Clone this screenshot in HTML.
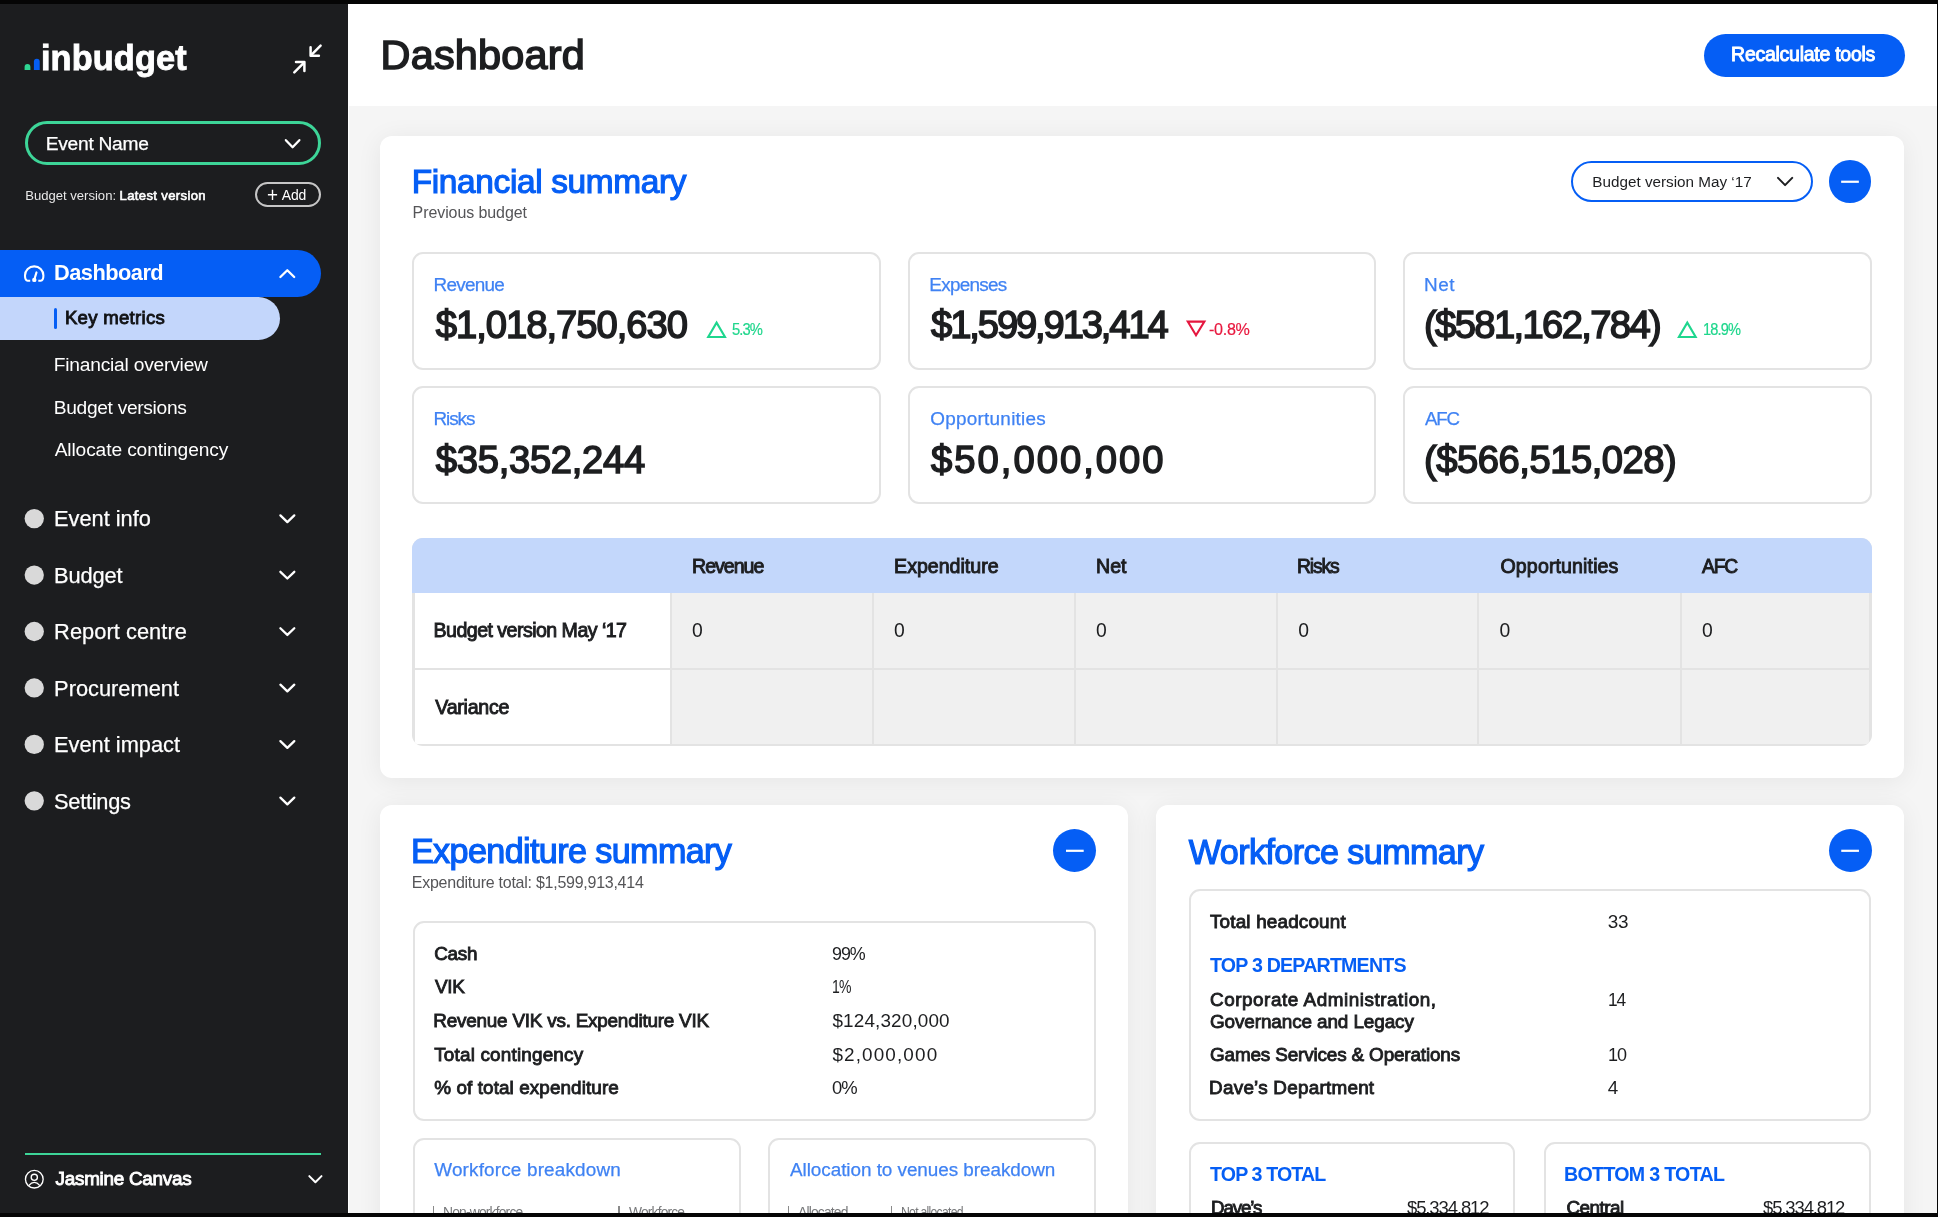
<!DOCTYPE html>
<html><head><meta charset="utf-8"><style>
*{box-sizing:border-box;margin:0;padding:0}
html,body{width:1938px;height:1217px;overflow:hidden;background:#000}
body{position:relative;font-family:"Liberation Sans",sans-serif}
.t{position:absolute;white-space:nowrap;line-height:1;z-index:6}
.a{position:absolute}
</style></head><body>
<div class="a" style="left:0px;top:0px;width:348px;height:1217px;background:#1c1d1f"></div>
<div class="a" style="left:348px;top:0px;width:1590px;height:106px;background:#fff"></div>
<div class="a" style="left:348px;top:106px;width:1590px;height:1111px;background:#f5f5f5"></div>
<div class="a" style="left:348px;top:106px;width:1px;height:1111px;background:#fff"></div>
<div class="a" style="left:25px;top:121px;width:295.5px;height:44px;border:3px solid #3dd598;border-radius:22px"></div>
<div class="a" style="left:255.3px;top:182.4px;width:65.5px;height:25.1px;border:2px solid #c6c6c6;border-radius:13px"></div>
<div class="a" style="left:0px;top:250px;width:321px;height:47px;background:#055ef5;border-radius:0 23.5px 23.5px 0"></div>
<div class="a" style="left:0px;top:297.4px;width:280px;height:43px;background:#c3d6fb;border-radius:0 21.5px 21.5px 0"></div>
<div class="a" style="left:54px;top:308.3px;width:3px;height:21px;background:#055ef5;border-radius:1.5px"></div>
<div class="a" style="left:24.7px;top:1152.6px;width:296.3px;height:2px;background:#3dd598"></div>
<div class="a" style="left:1704.4px;top:33.5px;width:200.2px;height:43.1px;background:#055ef5;border-radius:22px"></div>
<div class="a" style="left:380px;top:136px;width:1524px;height:641.8px;background:#fff;border-radius:12px;box-shadow:0 3px 26px rgba(0,0,0,0.065)"></div>
<div class="a" style="left:1571.2px;top:160.5px;width:242.2px;height:41.6px;border:2.8px solid #055ef5;border-radius:21px"></div>
<div class="a" style="left:1828.6px;top:160.3px;width:42.7px;height:42.5px;background:#055ef5;border-radius:50%"></div>
<div class="a" style="left:412.4px;top:252.0px;width:468.3px;height:118.2px;border:2.5px solid #e3e3e3;border-radius:11px;background:#fff"></div>
<div class="a" style="left:412.4px;top:386.3px;width:468.3px;height:118.2px;border:2.5px solid #e3e3e3;border-radius:11px;background:#fff"></div>
<div class="a" style="left:908.0px;top:252.0px;width:468.3px;height:118.2px;border:2.5px solid #e3e3e3;border-radius:11px;background:#fff"></div>
<div class="a" style="left:908.0px;top:386.3px;width:468.3px;height:118.2px;border:2.5px solid #e3e3e3;border-radius:11px;background:#fff"></div>
<div class="a" style="left:1403.4px;top:252.0px;width:468.3px;height:118.2px;border:2.5px solid #e3e3e3;border-radius:11px;background:#fff"></div>
<div class="a" style="left:1403.4px;top:386.3px;width:468.3px;height:118.2px;border:2.5px solid #e3e3e3;border-radius:11px;background:#fff"></div>
<div class="a" style="left:412.4px;top:537.7px;width:1459.2px;height:208.4px;border-radius:11px;overflow:hidden;background:#e3e3e3"><div class="a" style="left:0px;top:0px;width:1459.2px;height:55.8px;background:#c3d7fb"></div><div class="a" style="left:2.5px;top:55.8px;width:255.10000000000002px;height:74.50000000000001px;background:#fff"></div><div class="a" style="left:259.6px;top:55.8px;width:200.0px;height:74.50000000000001px;background:#f0f0f0"></div><div class="a" style="left:461.6px;top:55.8px;width:200.29999999999995px;height:74.50000000000001px;background:#f0f0f0"></div><div class="a" style="left:663.9px;top:55.8px;width:199.60000000000002px;height:74.50000000000001px;background:#f0f0f0"></div><div class="a" style="left:865.5px;top:55.8px;width:199.4000000000001px;height:74.50000000000001px;background:#f0f0f0"></div><div class="a" style="left:1066.9px;top:55.8px;width:200.39999999999986px;height:74.50000000000001px;background:#f0f0f0"></div><div class="a" style="left:1269.3px;top:55.8px;width:187.4000000000001px;height:74.50000000000001px;background:#f0f0f0"></div><div class="a" style="left:2.5px;top:132.4px;width:255.10000000000002px;height:73.5px;background:#fff"></div><div class="a" style="left:259.6px;top:132.4px;width:200.0px;height:73.5px;background:#f0f0f0"></div><div class="a" style="left:461.6px;top:132.4px;width:200.29999999999995px;height:73.5px;background:#f0f0f0"></div><div class="a" style="left:663.9px;top:132.4px;width:199.60000000000002px;height:73.5px;background:#f0f0f0"></div><div class="a" style="left:865.5px;top:132.4px;width:199.4000000000001px;height:73.5px;background:#f0f0f0"></div><div class="a" style="left:1066.9px;top:132.4px;width:200.39999999999986px;height:73.5px;background:#f0f0f0"></div><div class="a" style="left:1269.3px;top:132.4px;width:187.4000000000001px;height:73.5px;background:#f0f0f0"></div></div>
<div class="a" style="left:380px;top:805px;width:748.2px;height:600px;background:#fff;border-radius:12px;box-shadow:0 3px 26px rgba(0,0,0,0.065)"></div>
<div class="a" style="left:1053.4px;top:828.9px;width:42.9px;height:42.9px;background:#055ef5;border-radius:50%"></div>
<div class="a" style="left:412.9px;top:921.1px;width:683px;height:199.5px;border:2.5px solid #e3e3e3;border-radius:11px;background:#fff"></div>
<div class="a" style="left:412.9px;top:1138.4px;width:328px;height:200px;border:2.5px solid #e3e3e3;border-radius:11px;background:#fff"></div>
<div class="a" style="left:767.8px;top:1138.4px;width:328.1px;height:200px;border:2.5px solid #e3e3e3;border-radius:11px;background:#fff"></div>
<div class="a" style="left:1155.6px;top:805px;width:748.2px;height:600px;background:#fff;border-radius:12px;box-shadow:0 3px 26px rgba(0,0,0,0.065)"></div>
<div class="a" style="left:1828.5px;top:829.1px;width:43.2px;height:43.3px;background:#055ef5;border-radius:50%"></div>
<div class="a" style="left:1188.6px;top:888.8px;width:682.3px;height:232.4px;border:2.5px solid #e3e3e3;border-radius:11px;background:#fff"></div>
<div class="a" style="left:1188.6px;top:1141.6px;width:326.8px;height:200px;border:2.5px solid #e3e3e3;border-radius:11px;background:#fff"></div>
<div class="a" style="left:1543.9px;top:1141.6px;width:327px;height:200px;border:2.5px solid #e3e3e3;border-radius:11px;background:#fff"></div>
<div class="a" style="left:432.6px;top:1206px;width:1.3px;height:11px;background:#8a8a8a"></div>
<div class="a" style="left:618.4px;top:1206px;width:1.3px;height:11px;background:#8a8a8a"></div>
<div class="a" style="left:787.8px;top:1206px;width:1.3px;height:11px;background:#8a8a8a"></div>
<div class="a" style="left:890.9px;top:1206px;width:1.3px;height:11px;background:#8a8a8a"></div>
<svg class="a" style="left:0;top:0;z-index:5" width="1938" height="1217" viewBox="0 0 1938 1217"><path d="M24.6 70.1 V66.9 A2.9 2.9 0 0 1 30.4 66.9 V70.1 Z" fill="#2ed592"/><path d="M33.9 70.1 V61.6 A2.9 2.9 0 0 1 39.7 61.6 V70.1 Z" fill="#055ef5"/><g fill="none" stroke="#fff" stroke-width="2.5" stroke-linecap="round" stroke-linejoin="round"><path d="M320.6 45.6 L311.4 54.8"/><path d="M310.6 47.3 V55.8 H318.9"/><path d="M294.3 72.3 L303.3 63.3"/><path d="M296 62 H304.4 V70.9"/></g><path d="M285.85 140.20 L292.60 147.20 L299.35 140.20" fill="none" stroke="#fff" stroke-width="2.3" stroke-linecap="round" stroke-linejoin="round"/><path d="M267.9 194.8 H277.1 M272.5 189.8 V199.9" stroke="#fff" stroke-width="1.4"/><g fill="none" stroke="#fff" stroke-width="2.1" stroke-linecap="butt"><path d="M30.2 280.7 H27.6 Q25.0 280.7 25.0 275.6 A9.2 9.2 0 0 1 43.4 275.6 Q43.4 280.7 40.8 280.7 H38.3"/><path d="M34.3 279.6 L36.5 272.4" stroke-linecap="round"/></g><circle cx="34.3" cy="279.9" r="2.2" fill="#fff"/><path d="M280.40 277.00 L287.30 270.20 L294.20 277.00" fill="none" stroke="#fff" stroke-width="2.3" stroke-linecap="round" stroke-linejoin="round"/><circle cx="34.25" cy="518.60" r="9.65" fill="#d9d9d9"/><path d="M280.40 515.35 L287.35 522.05 L294.30 515.35" fill="none" stroke="#fff" stroke-width="2.3" stroke-linecap="round" stroke-linejoin="round"/><circle cx="34.25" cy="575.05" r="9.65" fill="#d9d9d9"/><path d="M280.40 571.80 L287.35 578.50 L294.30 571.80" fill="none" stroke="#fff" stroke-width="2.3" stroke-linecap="round" stroke-linejoin="round"/><circle cx="34.25" cy="631.50" r="9.65" fill="#d9d9d9"/><path d="M280.40 628.25 L287.35 634.95 L294.30 628.25" fill="none" stroke="#fff" stroke-width="2.3" stroke-linecap="round" stroke-linejoin="round"/><circle cx="34.25" cy="687.95" r="9.65" fill="#d9d9d9"/><path d="M280.40 684.70 L287.35 691.40 L294.30 684.70" fill="none" stroke="#fff" stroke-width="2.3" stroke-linecap="round" stroke-linejoin="round"/><circle cx="34.25" cy="744.40" r="9.65" fill="#d9d9d9"/><path d="M280.40 741.15 L287.35 747.85 L294.30 741.15" fill="none" stroke="#fff" stroke-width="2.3" stroke-linecap="round" stroke-linejoin="round"/><circle cx="34.25" cy="800.85" r="9.65" fill="#d9d9d9"/><path d="M280.40 797.60 L287.35 804.30 L294.30 797.60" fill="none" stroke="#fff" stroke-width="2.3" stroke-linecap="round" stroke-linejoin="round"/><g fill="none" stroke="#fff" stroke-width="1.35"><circle cx="34.3" cy="1179.2" r="8.85"/><circle cx="34.3" cy="1177.3" r="3.1"/><path d="M28.7 1185.6 Q34.3 1179.2 39.9 1185.6"/></g><path d="M309.30 1176.10 L315.40 1182.30 L321.50 1176.10" fill="none" stroke="#fff" stroke-width="2.0" stroke-linecap="round" stroke-linejoin="round"/><path d="M1778.00 177.90 L1785.10 185.10 L1792.20 177.90" fill="none" stroke="#1d1e20" stroke-width="2.0" stroke-linecap="round" stroke-linejoin="round"/><path d="M1841.15 181.75 H1858.85" stroke="#fff" stroke-width="2.2" stroke-linecap="butt"/><path d="M1066.00 850.80 H1083.70" stroke="#fff" stroke-width="2.2" stroke-linecap="butt"/><path d="M1841.25 850.80 H1858.95" stroke="#fff" stroke-width="2.2" stroke-linecap="butt"/><path d="M716.6 322.6 L708.2 337.0 H725.0 Z" fill="none" stroke="#1ed68e" stroke-width="2.1" stroke-linejoin="miter"/><path d="M1196.0 335.2 L1187.8 321.6 H1204.4 Z" fill="none" stroke="#e5173f" stroke-width="2.1"/><path d="M1687.3 322.6 L1678.9 337.0 H1695.7 Z" fill="none" stroke="#1ed68e" stroke-width="2.1"/></svg>
<div style="position:absolute;left:0;top:0;width:1938px;height:1217px;z-index:6;will-change:transform"><div id="t0" class="t " style="left:40.90px;top:40.66px;font-size:34.30px;font-weight:700;color:#ffffff;letter-spacing:0.144px;-webkit-text-stroke:0.9px #fff;">inbudget</div>
<div id="t1" class="t " style="left:45.76px;top:133.56px;font-size:19.19px;color:#ffffff;letter-spacing:-0.269px;-webkit-text-stroke:0.25px currentColor;">Event Name</div>
<div id="t2" class="t " style="left:25.16px;top:189.43px;font-size:13.08px;color:#e8e8e8;letter-spacing:-0.000px;">Budget version:</div>
<div id="t3" class="t " style="left:119.60px;top:189.43px;font-size:13.08px;color:#ffffff;letter-spacing:0.352px;-webkit-text-stroke:0.61px currentColor;">Latest version</div>
<div id="t4" class="t " style="left:281.84px;top:189.19px;font-size:13.95px;color:#ffffff;letter-spacing:-0.147px;">Add</div>
<div id="t5" class="t " style="left:54.04px;top:262.44px;font-size:21.80px;font-weight:700;color:#ffffff;letter-spacing:-0.529px;">Dashboard</div>
<div id="t6" class="t " style="left:64.88px;top:309.45px;font-size:18.60px;color:#111214;letter-spacing:0.279px;-webkit-text-stroke:0.87px currentColor;">Key metrics</div>
<div id="t7" class="t " style="left:53.76px;top:355.36px;font-size:19.19px;color:#ffffff;letter-spacing:-0.213px;">Financial overview</div>
<div id="t8" class="t " style="left:53.76px;top:397.76px;font-size:19.19px;color:#ffffff;letter-spacing:-0.322px;">Budget versions</div>
<div id="t9" class="t " style="left:54.66px;top:439.56px;font-size:19.19px;color:#ffffff;letter-spacing:-0.124px;">Allocate contingency</div>
<div id="t10" class="t " style="left:54.10px;top:508.34px;font-size:21.80px;color:#ffffff;letter-spacing:-0.017px;-webkit-text-stroke:0.25px currentColor;">Event info</div>
<div id="t11" class="t " style="left:54.10px;top:564.79px;font-size:21.80px;color:#ffffff;letter-spacing:-0.138px;-webkit-text-stroke:0.25px currentColor;">Budget</div>
<div id="t12" class="t " style="left:54.10px;top:621.24px;font-size:21.80px;color:#ffffff;letter-spacing:0.058px;-webkit-text-stroke:0.25px currentColor;">Report centre</div>
<div id="t13" class="t " style="left:54.10px;top:677.69px;font-size:21.80px;color:#ffffff;letter-spacing:0.008px;-webkit-text-stroke:0.25px currentColor;">Procurement</div>
<div id="t14" class="t " style="left:54.10px;top:734.14px;font-size:21.80px;color:#ffffff;letter-spacing:-0.011px;-webkit-text-stroke:0.25px currentColor;">Event impact</div>
<div id="t15" class="t " style="left:54.10px;top:790.59px;font-size:21.80px;color:#ffffff;letter-spacing:-0.282px;-webkit-text-stroke:0.25px currentColor;">Settings</div>
<div id="t16" class="t " style="left:55.56px;top:1170.41px;font-size:18.90px;color:#ffffff;letter-spacing:-0.270px;-webkit-text-stroke:0.89px currentColor;">Jasmine Canvas</div>
<div id="t17" class="t " style="left:380.58px;top:35.23px;font-size:41.42px;color:#1d1e20;letter-spacing:0.196px;-webkit-text-stroke:1.53px currentColor;">Dashboard</div>
<div id="t18" class="t " style="left:1731.10px;top:45.01px;font-size:19.48px;color:#ffffff;letter-spacing:-0.252px;-webkit-text-stroke:0.92px currentColor;">Recalculate tools</div>
<div id="t19" class="t " style="left:411.70px;top:164.80px;font-size:33.43px;color:#055ef5;letter-spacing:-0.351px;-webkit-text-stroke:1.17px currentColor;">Financial summary</div>
<div id="t20" class="t " style="left:412.60px;top:205.27px;font-size:15.99px;color:#555558;letter-spacing:-0.082px;">Previous budget</div>
<div id="t21" class="t " style="left:1592.32px;top:173.58px;font-size:15.26px;color:#1d1e20;letter-spacing:0.000px;">Budget version May ‘17</div>
<div id="t22" class="t " style="left:433.54px;top:275.61px;font-size:18.90px;color:#3f82f3;letter-spacing:-0.713px;-webkit-text-stroke:0.25px currentColor;">Revenue</div>
<div id="t23" class="t " style="left:929.32px;top:275.61px;font-size:18.90px;color:#3f82f3;letter-spacing:-0.718px;-webkit-text-stroke:0.25px currentColor;">Expenses</div>
<div id="t24" class="t " style="left:1424.04px;top:275.61px;font-size:18.90px;color:#3f82f3;letter-spacing:0.529px;-webkit-text-stroke:0.25px currentColor;">Net</div>
<div id="t25" class="t " style="left:433.54px;top:409.71px;font-size:18.90px;color:#3f82f3;letter-spacing:-1.095px;-webkit-text-stroke:0.25px currentColor;">Risks</div>
<div id="t26" class="t " style="left:930.22px;top:409.71px;font-size:18.90px;color:#3f82f3;letter-spacing:0.269px;-webkit-text-stroke:0.25px currentColor;">Opportunities</div>
<div id="t27" class="t " style="left:1424.94px;top:409.71px;font-size:18.90px;color:#3f82f3;letter-spacing:-1.134px;transform:scaleX(0.9870);transform-origin:0 0;-webkit-text-stroke:0.25px currentColor;">AFC</div>
<div id="t28" class="t " style="left:435.84px;top:306.14px;font-size:38.23px;color:#1d1e20;letter-spacing:-1.038px;-webkit-text-stroke:1.53px currentColor;">$1,018,750,630</div>
<div id="t29" class="t " style="left:931.12px;top:306.14px;font-size:38.23px;color:#1d1e20;letter-spacing:-2.153px;-webkit-text-stroke:1.53px currentColor;">$1,599,913,414</div>
<div id="t30" class="t " style="left:1424.04px;top:306.14px;font-size:38.23px;color:#1d1e20;letter-spacing:-1.656px;-webkit-text-stroke:1.53px currentColor;">($581,162,784)</div>
<div id="t31" class="t " style="left:435.84px;top:441.14px;font-size:38.23px;color:#1d1e20;letter-spacing:-0.314px;-webkit-text-stroke:1.53px currentColor;">$35,352,244</div>
<div id="t32" class="t " style="left:931.12px;top:441.14px;font-size:38.23px;color:#1d1e20;letter-spacing:1.986px;-webkit-text-stroke:1.53px currentColor;">$50,000,000</div>
<div id="t33" class="t " style="left:1424.04px;top:441.14px;font-size:38.23px;color:#1d1e20;letter-spacing:-0.502px;-webkit-text-stroke:1.53px currentColor;">($566,515,028)</div>
<div id="t34" class="t " style="left:732.44px;top:321.14px;font-size:16.13px;color:#1fd68c;letter-spacing:-0.968px;transform:scaleX(0.9154);transform-origin:0 0;-webkit-text-stroke:0.2px currentColor;">5.3%</div>
<div id="t35" class="t " style="left:1208.88px;top:321.14px;font-size:16.13px;color:#e8193f;letter-spacing:-0.255px;-webkit-text-stroke:0.2px currentColor;">-0.8%</div>
<div id="t36" class="t " style="left:1702.82px;top:321.14px;font-size:16.13px;color:#1fd68c;letter-spacing:-0.968px;transform:scaleX(0.9067);transform-origin:0 0;-webkit-text-stroke:0.2px currentColor;">18.9%</div>
<div id="t37" class="t " style="left:692.10px;top:556.89px;font-size:19.62px;color:#1d1e20;letter-spacing:-1.051px;-webkit-text-stroke:0.92px currentColor;">Revenue</div>
<div id="t38" class="t " style="left:894.10px;top:556.89px;font-size:19.62px;color:#1d1e20;letter-spacing:-0.020px;-webkit-text-stroke:0.92px currentColor;">Expenditure</div>
<div id="t39" class="t " style="left:1096.10px;top:556.89px;font-size:19.62px;color:#1d1e20;letter-spacing:-0.096px;-webkit-text-stroke:0.92px currentColor;">Net</div>
<div id="t40" class="t " style="left:1297.32px;top:556.89px;font-size:19.62px;color:#1d1e20;letter-spacing:-1.177px;transform:scaleX(0.9855);transform-origin:0 0;-webkit-text-stroke:0.92px currentColor;">Risks</div>
<div id="t41" class="t " style="left:1500.50px;top:556.89px;font-size:19.62px;color:#1d1e20;letter-spacing:0.107px;-webkit-text-stroke:0.92px currentColor;">Opportunities</div>
<div id="t42" class="t " style="left:1701.94px;top:556.89px;font-size:19.62px;color:#1d1e20;letter-spacing:-1.177px;transform:scaleX(0.9835);transform-origin:0 0;-webkit-text-stroke:0.92px currentColor;">AFC</div>
<div id="t43" class="t " style="left:433.54px;top:621.19px;font-size:19.62px;color:#1d1e20;letter-spacing:-0.546px;-webkit-text-stroke:0.92px currentColor;">Budget version May ‘17</div>
<div id="t44" class="t " style="left:692.10px;top:621.44px;font-size:19.33px;color:#1d1e20;letter-spacing:0.000px;">0</div>
<div id="t45" class="t " style="left:894.10px;top:621.44px;font-size:19.33px;color:#1d1e20;letter-spacing:0.000px;">0</div>
<div id="t46" class="t " style="left:1096.10px;top:621.44px;font-size:19.33px;color:#1d1e20;letter-spacing:0.000px;">0</div>
<div id="t47" class="t " style="left:1298.22px;top:621.44px;font-size:19.33px;color:#1d1e20;letter-spacing:0.000px;">0</div>
<div id="t48" class="t " style="left:1499.60px;top:621.44px;font-size:19.33px;color:#1d1e20;letter-spacing:0.000px;">0</div>
<div id="t49" class="t " style="left:1701.94px;top:621.44px;font-size:19.33px;color:#1d1e20;letter-spacing:0.000px;">0</div>
<div id="t50" class="t " style="left:435.34px;top:698.19px;font-size:19.62px;color:#1d1e20;letter-spacing:-0.262px;-webkit-text-stroke:0.92px currentColor;">Variance</div>
<div id="t51" class="t " style="left:410.92px;top:834.29px;font-size:34.16px;color:#055ef5;letter-spacing:-0.622px;-webkit-text-stroke:1.20px currentColor;">Expenditure summary</div>
<div id="t52" class="t " style="left:411.82px;top:875.07px;font-size:15.99px;color:#555558;letter-spacing:-0.250px;">Expenditure total: $1,599,913,414</div>
<div id="t53" class="t " style="left:434.22px;top:944.51px;font-size:18.90px;color:#1d1e20;letter-spacing:-0.307px;-webkit-text-stroke:0.89px currentColor;">Cash</div>
<div id="t54" class="t " style="left:831.54px;top:944.51px;font-size:18.90px;color:#1d1e20;letter-spacing:-1.134px;transform:scaleX(0.9476);transform-origin:0 0;">99%</div>
<div id="t55" class="t " style="left:435.12px;top:977.91px;font-size:18.90px;color:#1d1e20;letter-spacing:-0.400px;-webkit-text-stroke:0.89px currentColor;">VIK</div>
<div id="t56" class="t " style="left:831.54px;top:977.91px;font-size:18.90px;color:#1d1e20;letter-spacing:-1.134px;transform:scaleX(0.7425);transform-origin:0 0;">1%</div>
<div id="t57" class="t " style="left:433.32px;top:1012.11px;font-size:18.90px;color:#1d1e20;letter-spacing:-0.223px;-webkit-text-stroke:0.89px currentColor;">Revenue VIK vs. Expenditure VIK</div>
<div id="t58" class="t " style="left:832.44px;top:1012.11px;font-size:18.90px;color:#1d1e20;letter-spacing:0.145px;">$124,320,000</div>
<div id="t59" class="t " style="left:434.22px;top:1045.51px;font-size:18.90px;color:#1d1e20;letter-spacing:0.183px;-webkit-text-stroke:0.89px currentColor;">Total contingency</div>
<div id="t60" class="t " style="left:832.44px;top:1045.51px;font-size:18.90px;color:#1d1e20;letter-spacing:1.130px;">$2,000,000</div>
<div id="t61" class="t " style="left:434.22px;top:1079.21px;font-size:18.90px;color:#1d1e20;letter-spacing:0.088px;-webkit-text-stroke:0.89px currentColor;">% of total expenditure</div>
<div id="t62" class="t " style="left:831.54px;top:1079.21px;font-size:18.90px;color:#1d1e20;letter-spacing:-1.134px;transform:scaleX(0.9752);transform-origin:0 0;">0%</div>
<div id="t63" class="t " style="left:434.22px;top:1161.11px;font-size:18.90px;color:#3f82f3;letter-spacing:0.177px;-webkit-text-stroke:0.25px currentColor;">Workforce breakdown</div>
<div id="t64" class="t " style="left:790.00px;top:1161.11px;font-size:18.90px;color:#3f82f3;letter-spacing:-0.048px;-webkit-text-stroke:0.25px currentColor;">Allocation to venues breakdown</div>
<div id="t65" class="t " style="left:1188.78px;top:834.89px;font-size:34.16px;color:#055ef5;letter-spacing:-0.600px;-webkit-text-stroke:1.20px currentColor;">Workforce summary</div>
<div id="t66" class="t " style="left:1210.00px;top:912.51px;font-size:18.90px;color:#1d1e20;letter-spacing:0.164px;-webkit-text-stroke:0.89px currentColor;">Total headcount</div>
<div id="t67" class="t " style="left:1607.66px;top:912.51px;font-size:18.90px;color:#1d1e20;letter-spacing:-0.052px;">33</div>
<div id="t68" class="t " style="left:1210.00px;top:955.89px;font-size:19.62px;font-weight:700;color:#055ef5;letter-spacing:-0.792px;">TOP 3 DEPARTMENTS</div>
<div id="t69" class="t " style="left:1210.00px;top:990.71px;font-size:18.90px;color:#1d1e20;letter-spacing:0.534px;-webkit-text-stroke:0.89px currentColor;">Corporate Administration,</div>
<div id="t70" class="t " style="left:1210.00px;top:1012.51px;font-size:18.90px;color:#1d1e20;letter-spacing:-0.101px;-webkit-text-stroke:0.89px currentColor;">Governance and Legacy</div>
<div id="t71" class="t " style="left:1607.66px;top:990.71px;font-size:18.90px;color:#1d1e20;letter-spacing:-1.134px;transform:scaleX(0.9176);transform-origin:0 0;">14</div>
<div id="t72" class="t " style="left:1210.00px;top:1045.51px;font-size:18.90px;color:#1d1e20;letter-spacing:-0.151px;-webkit-text-stroke:0.89px currentColor;">Games Services &amp; Operations</div>
<div id="t73" class="t " style="left:1607.66px;top:1045.51px;font-size:18.90px;color:#1d1e20;letter-spacing:-1.134px;transform:scaleX(0.9538);transform-origin:0 0;">10</div>
<div id="t74" class="t " style="left:1209.10px;top:1079.21px;font-size:18.90px;color:#1d1e20;letter-spacing:0.230px;-webkit-text-stroke:0.89px currentColor;">Dave’s Department</div>
<div id="t75" class="t " style="left:1607.66px;top:1079.21px;font-size:18.90px;color:#1d1e20;letter-spacing:0.000px;">4</div>
<div id="t76" class="t " style="left:1210.00px;top:1165.09px;font-size:19.62px;font-weight:700;color:#055ef5;letter-spacing:-0.875px;">TOP 3 TOTAL</div>
<div id="t77" class="t " style="left:1211.24px;top:1198.71px;font-size:18.90px;color:#1d1e20;letter-spacing:-1.134px;transform:scaleX(0.9920);transform-origin:0 0;-webkit-text-stroke:0.89px currentColor;">Dave’s</div>
<div id="t78" class="t " style="left:1407.30px;top:1198.71px;font-size:18.90px;color:#1d1e20;letter-spacing:-1.134px;transform:scaleX(0.9786);transform-origin:0 0;">$5,334,812</div>
<div id="t79" class="t " style="left:1566.46px;top:1198.71px;font-size:18.90px;color:#1d1e20;letter-spacing:-0.533px;-webkit-text-stroke:0.89px currentColor;">Central</div>
<div id="t80" class="t " style="left:1763.02px;top:1198.71px;font-size:18.90px;color:#1d1e20;letter-spacing:-1.134px;transform:scaleX(0.9767);transform-origin:0 0;">$5,334,812</div>
<div id="t81" class="t " style="left:1564.10px;top:1165.09px;font-size:19.62px;font-weight:700;color:#055ef5;letter-spacing:-0.700px;">BOTTOM 3 TOTAL</div>
<div id="t82" class="t " style="left:442.80px;top:1205.45px;font-size:14.83px;color:#77787a;letter-spacing:-0.890px;transform:scaleX(0.9358);transform-origin:0 0;">Non-workforce</div>
<div id="t83" class="t " style="left:628.80px;top:1205.45px;font-size:14.83px;color:#77787a;letter-spacing:-0.890px;transform:scaleX(0.9308);transform-origin:0 0;">Workforce</div>
<div id="t84" class="t " style="left:797.80px;top:1205.45px;font-size:14.83px;color:#77787a;letter-spacing:-0.890px;transform:scaleX(0.9362);transform-origin:0 0;">Allocated</div>
<div id="t85" class="t " style="left:900.80px;top:1205.45px;font-size:14.83px;color:#77787a;letter-spacing:-0.890px;transform:scaleX(0.8239);transform-origin:0 0;">Not allocated</div></div>
<div class="a" style="left:0px;top:0px;width:1938px;height:4px;background:#050505;z-index:10"></div><div class="a" style="left:0px;top:1213px;width:1938px;height:4px;background:#050505;z-index:10"></div><div class="a" style="left:1936.5px;top:0px;width:1.5px;height:1217px;background:#050505;z-index:10"></div>
</body></html>
